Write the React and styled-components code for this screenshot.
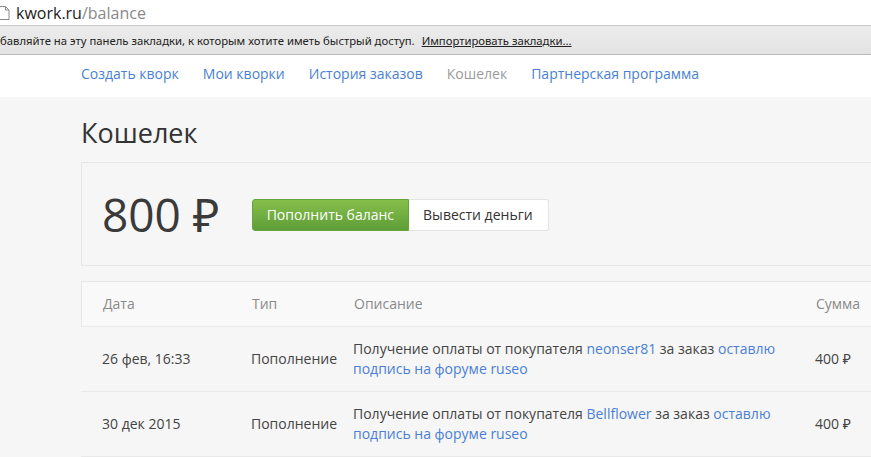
import React from "react";
import styled, { createGlobalStyle } from "styled-components";

const GlobalStyle = createGlobalStyle`
  html, body {
    margin: 0;
    padding: 0;
    background: #f6f6f6;
    font-family: "Open Sans", "Noto Sans", sans-serif;
    color: #444;
  }
  * { box-sizing: border-box; }
`;

const AddressBar = styled.div`
  height: 25px;
  background: #fff;
  display: flex;
  align-items: center;
  gap: 6px;
  font-family: "Open Sans", "Noto Sans", sans-serif;
  font-size: 16px;
  color: #222;
  overflow: hidden;
`;

const Path = styled.span`
  color: #888;
`;

const BookmarksBar = styled.div`
  height: 30px;
  background: linear-gradient(#ececec, #e3e3e3);
  border-top: 1px solid #c9c9c9;
  border-bottom: 1px solid #b8b8b8;
  display: flex;
  align-items: center;
  font-family: "Noto Sans", "Open Sans", sans-serif;
  font-size: 11.3px;
  color: #222;
  white-space: nowrap;
  overflow: hidden;
`;

const ImportLink = styled.span`
  margin-left: 7px;
  text-decoration: underline;
`;

const Nav = styled.nav`
  height: 42px;
  background: #fff;
  display: flex;
  align-items: center;
  gap: 24px;
  padding: 0 0 6px 81px;
  font-size: 14px;
`;

const NavLink = styled.a`
  color: ${({ $active }) => ($active ? "#9a9a9a" : "#4a7fd4")};
  text-decoration: none;
`;

const Main = styled.main`
  padding: 20px 0 0 81px;
  overflow: hidden;
`;

const Title = styled.h1`
  margin: 0 0 13px;
  font-size: 27px;
  font-weight: 400;
  color: #333;
  line-height: 32px;
`;

const BalanceBox = styled.section`
  height: 104px;
  border: 1px solid #e6e6e6;
  border-right: none;
  display: flex;
  align-items: center;
  padding-left: 20px;
  gap: 32px;
  margin-bottom: 15px;
`;

const Amount = styled.div`
  font-size: 46px;
  color: #3a3a3a;
  line-height: 1;
`;

const ButtonGroup = styled.div`
  display: flex;
  margin-top: 1px;
`;

const Button = styled.button`
  height: 32px;
  padding: ${({ $primary }) => ($primary ? "0 14px" : "0 15px 0 14px")};
  font-family: inherit;
  font-size: 14px;
  border-radius: ${({ $primary }) => ($primary ? "3px 0 0 3px" : "0 3px 3px 0")};
  border: 1px solid ${({ $primary }) => ($primary ? "#66a33d" : "#e3e3e3")};
  border-left: ${({ $primary }) => ($primary ? "1px solid #66a33d" : "none")};
  background: ${({ $primary }) =>
    $primary ? "linear-gradient(#86bf4b, #5e9e38)" : "#fff"};
  color: ${({ $primary }) => ($primary ? "#fff" : "#333")};
`;

const Table = styled.div`
  font-size: 14px;
`;

const Row = styled.div`
  display: grid;
  grid-template-columns: 170px 102px 462px 1fr;
  align-items: center;
  min-height: ${({ $head }) => ($head ? "46px" : "65px")};
  background: ${({ $head }) => ($head ? "#f9f9f9" : "transparent")};
  border: ${({ $head }) => ($head ? "1px solid #e6e6e6" : "none")};
  border-right: none;
  border-bottom: 1px solid #e9e9e9;
  color: ${({ $head }) => ($head ? "#8a8a8a" : "#444")};
  line-height: 20px;
`;

const Cell = styled.div`
  padding-left: ${({ $first }) => ($first ? "21px" : "0")};
  padding-right: ${({ $desc }) => ($desc ? "24px" : "0")};
`;

const Link = styled.a`
  color: #4a7fd4;
  text-decoration: none;
`;

const FileIcon = () => (
  <svg width="12" height="16" viewBox="0 0 12 16" style={{ marginLeft: -2 }}>
    <path d="M1 1.5h6.5L11 5v9.5H1z" fill="#fff" stroke="#8a8a8a" />
    <path d="M7.5 1.5V5H11" fill="none" stroke="#8a8a8a" />
  </svg>
);

const rows = [
  { date: "26 фев, 16:33", buyer: "neonser81" },
  { date: "30 дек 2015", buyer: "Bellflower" },
];

export default function App() {
  return (
    <>
      <GlobalStyle />
      <AddressBar>
        <FileIcon />
        <span>
          kwork.ru<Path>/balance</Path>
        </span>
      </AddressBar>
      <BookmarksBar>
        бавляйте на эту панель закладки, к которым хотите иметь быстрый доступ.
        <ImportLink>Импортировать закладки...</ImportLink>
      </BookmarksBar>
      <Nav>
        <NavLink href="#">Создать кворк</NavLink>
        <NavLink href="#">Мои кворки</NavLink>
        <NavLink href="#">История заказов</NavLink>
        <NavLink href="#" $active>Кошелек</NavLink>
        <NavLink href="#">Партнерская программа</NavLink>
      </Nav>
      <Main>
        <Title>Кошелек</Title>
        <BalanceBox>
          <Amount>800 ₽</Amount>
          <ButtonGroup>
            <Button $primary>Пополнить баланс</Button>
            <Button>Вывести деньги</Button>
          </ButtonGroup>
        </BalanceBox>
        <Table>
          <Row $head>
            <Cell $first>Дата</Cell>
            <Cell>Тип</Cell>
            <Cell>Описание</Cell>
            <Cell>Сумма</Cell>
          </Row>
          {rows.map((r) => (
            <Row key={r.buyer}>
              <Cell $first>{r.date}</Cell>
              <Cell>Пополнение</Cell>
              <Cell $desc>
                Получение оплаты от покупателя <Link href="#">{r.buyer}</Link> за заказ{" "}
                <Link href="#">оставлю подпись на форуме ruseo</Link>
              </Cell>
              <Cell>400 ₽</Cell>
            </Row>
          ))}
        </Table>
      </Main>
    </>
  );
}
